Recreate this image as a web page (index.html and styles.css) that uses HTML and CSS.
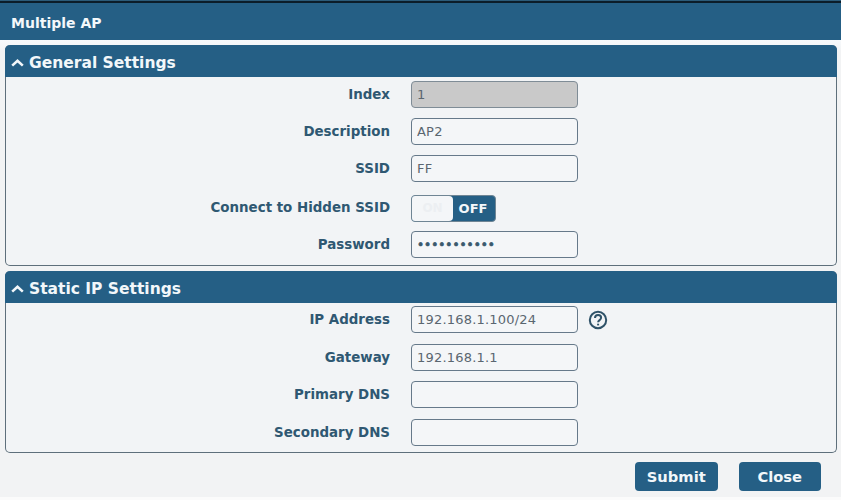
FILE: index.html
```html
<!DOCTYPE html>
<html lang="en">
<head>
<meta charset="utf-8">
<title>Multiple AP</title>
<link rel="stylesheet" href="styles.css">
</head>
<body>
<div class="dialog">
  <header class="title-bar">Multiple AP</header>
  <main class="content">
    <section class="panel panel-general">
      <h2 class="panel-head">
        <svg class="chevron" viewBox="0 0 13 8" aria-hidden="true"><path d="M1.2 6.600 6.500 1.800l5.300 4.800"/></svg>
        General Settings
      </h2>
      <div class="rows">
        <div class="row"><label class="label">Index</label><input class="field field-disabled" value="1" readonly></div>
        <div class="row"><label class="label">Description</label><input class="field" value="AP2"></div>
        <div class="row"><label class="label">SSID</label><input class="field" value="FF"></div>
        <div class="row row-toggle">
          <label class="label">Connect to Hidden SSID</label>
          <div class="toggle"><span class="toggle-off-side">ON</span><span class="toggle-on">OFF</span></div>
        </div>
        <div class="row"><label class="label">Password</label><input class="field field-pass" type="password" value="12345678901"></div>
      </div>
    </section>
    <section class="panel panel-static">
      <h2 class="panel-head">
        <svg class="chevron" viewBox="0 0 13 8" aria-hidden="true"><path d="M1.2 6.600 6.500 1.800l5.300 4.800"/></svg>
        Static IP Settings
      </h2>
      <div class="rows">
        <div class="row">
          <label class="label">IP Address</label><input class="field" value="192.168.1.100/24">
          <svg class="help" viewBox="0 0 20 20" aria-hidden="true"><circle cx="10" cy="10" r="8.200"/><path d="M7 8.100c0-1.900 1.400-3 3.100-3s3 1.100 3 2.700c0 2.300-3 2.300-3 4.500"/><path d="M10.100 13.700v1.700"/></svg>
        </div>
        <div class="row"><label class="label">Gateway</label><input class="field" value="192.168.1.1"></div>
        <div class="row"><label class="label">Primary DNS</label><input class="field"></div>
        <div class="row"><label class="label">Secondary DNS</label><input class="field"></div>
      </div>
    </section>
    <div class="actions">
      <button class="btn btn-submit" type="button">Submit</button>
      <button class="btn btn-close" type="button">Close</button>
    </div>
  </main>
</div>
</body>
</html>
```
FILE: styles.css
```css
* { box-sizing: border-box; }
html, body { margin: 0; padding: 0; }
body {
  width: 841px;
  height: 500px;
  overflow: hidden;
  background: #fbfbfb;
  font-family: "DejaVu Sans", sans-serif;
}
.dialog {
  height: 497px;
  padding-top: 1px;
  background: #2c5b79;
  display: flex;
  flex-direction: column;
}
.title-bar {
  height: 39px;
  border-top: 2px solid #0c1d29;
  background: #255f85;
  color: #f4f8fb;
  font-size: 14px;
  font-weight: 700;
  line-height: 37px;
  padding: 2px 0 0 11px;
  flex: none;
}
.content {
  flex: 1;
  padding: 5px 4px 0 5px;
  background: linear-gradient(#f7fafc, #f2f3f4 12px);
}
.panel {
  border: 1px solid #5e6f7b;
  border-top: 0;
  border-radius: 5px;
  background: #f2f4f6;
}
.panel-general { height: 221px; margin-bottom: 5px; }
.panel-static { height: 182px; }
.panel-head {
  margin: 0 -1px;
  height: 32px;
  background: #255f85;
  border-radius: 5px 5px 0 0;
  color: #f2f7fa;
  font-size: 15.500px;
  font-weight: 700;
  display: flex;
  align-items: center;
  gap: 5px;
  padding: 3px 0 0 6px;
}
.chevron {
  width: 13px;
  height: 8px;
  fill: none;
  stroke: #f2f7fa;
  stroke-width: 2.600;
}
.rows {
  padding-top: 4px;
  display: flex;
  flex-direction: column;
  gap: 10px;
}
.panel-static .rows { padding-top: 3px; gap: 10.500px; }
.row {
  height: 27px;
  display: flex;
  align-items: center;
}
.row-toggle { margin-top: 3px; margin-bottom: -1px; }
.row-toggle .label { padding-bottom: 2px; }
.label {
  width: 384px;
  margin-right: 21px;
  text-align: right;
  color: #2f5872;
  font-size: 13.400px;
  font-weight: 700;
  white-space: nowrap;
}
.field {
  width: 167px;
  height: 27px;
  padding: 0 5px;
  border: 1px solid #66798a;
  border-radius: 4px;
  background: #f4f6f8;
  color: #5a6670;
  font-family: "DejaVu Sans", sans-serif;
  font-size: 13px;
  letter-spacing: 0.200px;
  outline: none;
}
.field-disabled { background: #c9c9c9; border-color: #7f8c96; }
.field-pass {
  color: #3b5a6e;
  font-size: 12px;
  letter-spacing: 0;
  -webkit-text-stroke: 0.600px #3b5a6e;
}
.toggle {
  width: 85px;
  height: 27px;
  display: flex;
  border: 1px solid #6f8594;
  border-radius: 4px;
  background: #255f85;
  overflow: hidden;
}
.toggle-off-side {
  width: 41px;
  background: #f4f6f8;
  border-radius: 0 4px 4px 0;
  color: #eceff2;
  font-size: 12px;
  font-weight: 700;
  line-height: 25px;
  text-align: center;
}
.toggle-on {
  flex: 1;
  padding-right: 2px;
  text-align: center;
  line-height: 25px;
  color: #f3f7fa;
  font-size: 13px;
  font-weight: 700;
}
.help {
  width: 20px;
  height: 20px;
  margin-left: 10px;
  fill: none;
  stroke: #2f5268;
  stroke-width: 2;
}
.actions {
  display: flex;
  justify-content: flex-end;
  gap: 21px;
  padding: 9px 16px 0 0;
}
.btn {
  width: 82.500px;
  height: 29px;
  border: 0;
  border-radius: 4px;
  background: #255f85;
  color: #f2f7fa;
  font-family: "DejaVu Sans", sans-serif;
  font-size: 14.700px;
  font-weight: 700;
  padding: 0;
}
```
